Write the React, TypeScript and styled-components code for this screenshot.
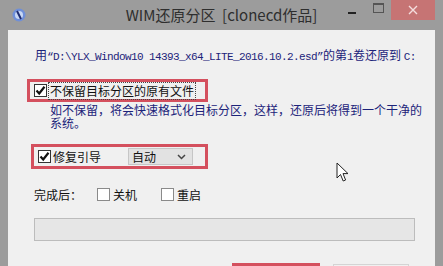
import React from 'react'
import styled, { createGlobalStyle } from 'styled-components'

const GlobalStyle = createGlobalStyle`
    html, body {
        margin: 0;
        padding: 0;
        width: 443px;
        height: 266px;
        overflow: hidden;
        background: #9c9c9c;
    }
    body {
        font-family: "Noto Sans CJK SC", "Liberation Sans", sans-serif;
    }
`

interface CheckProps {
    checked?: boolean
}

const CheckBox: React.FC<CheckProps> = ({ checked }) => {
    return (
        <Box className={checked ? 'on' : ''}>
            {checked && (
                <svg width="11" height="11" viewBox="0 0 11 11">
                    <path d="M1.5 5.5 L4.2 8.5 L9.5 1.8" fill="none" stroke="#111" strokeWidth="2.2" />
                </svg>
            )}
        </Box>
    )
}

const App: React.FC = () => {
    return (
        <Window>
            <GlobalStyle />
            <TitleBar>
                <AppIcon>
                    <svg width="14" height="14" viewBox="0 0 14 14">
                        <circle cx="7" cy="7" r="6.5" fill="#6f8fd8" />
                        <circle cx="7" cy="7" r="4" fill="#c8d8f4" />
                        <path d="M5 3 L9 11" stroke="#1c2a70" strokeWidth="2" />
                    </svg>
                </AppIcon>
                <Title>WIM还原分区&nbsp;&nbsp;[clonecd作品]</Title>
                <Controls>
                    <CtrlButton>
                        <MinGlyph />
                    </CtrlButton>
                    <CtrlButton>
                        <MaxGlyph />
                    </CtrlButton>
                    <CloseButton>
                        <svg width="10" height="10" viewBox="0 0 10 10">
                            <path d="M1 1 L9 9 M9 1 L1 9" stroke="#f4dede" strokeWidth="1.4" />
                        </svg>
                    </CloseButton>
                </Controls>
            </TitleBar>
            <Body>
                <PathLine>
                    用<Mono>“D:\YLX_Window10 14393_x64_LITE_2016.10.2.esd”</Mono>的第<Mono>1</Mono>卷还原到 <Mono>C:</Mono>
                </PathLine>
                <Highlight $left={19} $width={181} $height={23} $top={17}>
                    <CheckBox checked />
                    <FocusLabel>不保留目标分区的原有文件</FocusLabel>
                </Highlight>
                <Desc>
                    <div>如不保留，将会快速格式化目标分区，这样，还原后将得到一个干净的</div>
                    <div>系统。</div>
                </Desc>
                <Highlight $left={23} $width={177} $height={25} $top={15}>
                    <CheckBox checked />
                    <Label>修复引导</Label>
                    <Select>
                        自动
                        <svg width="9" height="6" viewBox="0 0 9 6">
                            <path d="M1 1 L4.5 4.5 L8 1" fill="none" stroke="#444" strokeWidth="1.5" />
                        </svg>
                    </Select>
                </Highlight>
                <FinishRow>
                    <span>完成后：</span>
                    <Option>
                        <CheckBox />
                        <span>关机</span>
                    </Option>
                    <Option>
                        <CheckBox />
                        <span>重启</span>
                    </Option>
                </FinishRow>
                <Progress />
                <ButtonRow>
                    <PrimaryButton />
                    <PlainButton />
                </ButtonRow>
                <Cursor>
                    <svg width="14" height="21" viewBox="0 0 14 21">
                        <path d="M1 1 L1 16 L4.5 12.5 L7.2 19 L9.6 18 L7 11.6 L12 11.6 Z" fill="#fff" stroke="#222" strokeWidth="1" strokeLinejoin="round" />
                    </svg>
                </Cursor>
            </Body>
        </Window>
    )
}

const Window = styled.div`
    width: 443px;
    height: 266px;
    display: flex;
    flex-direction: column;
    background: #9c9c9c;
    overflow: hidden;
`

const TitleBar = styled.div`
    height: 30px;
    flex-shrink: 0;
    display: flex;
    align-items: flex-start;
    position: relative;
`

const AppIcon = styled.div`
    width: 14px;
    height: 14px;
    margin: 8px 0 0 12px;
    display: flex;
`

const Title = styled.div`
    position: absolute;
    left: 0;
    right: 0;
    top: 5px;
    text-align: center;
    font-size: 15px;
    line-height: 20px;
    color: #2e2e2e;
`

const Controls = styled.div`
    margin-left: auto;
    margin-right: 8px;
    display: flex;
    align-items: flex-start;
`

const CtrlButton = styled.div`
    width: 27px;
    height: 20px;
    display: flex;
    align-items: center;
    justify-content: center;
`

const MinGlyph = styled.div`
    width: 8px;
    height: 2px;
    background: #222;
    margin-top: 6px;
`

const MaxGlyph = styled.div`
    width: 9px;
    height: 7px;
    border: 1px solid #555;
    border-top-width: 2px;
    margin-top: -4px;
`

const CloseButton = styled.div`
    width: 44px;
    height: 20px;
    margin-left: -1px;
    background: #c67474;
    display: flex;
    align-items: center;
    justify-content: center;
`

const Body = styled.div`
    flex: 1;
    margin: 0 8px 0 8px;
    background: #f0f0f0;
    position: relative;
    display: flex;
    flex-direction: column;
    align-items: flex-start;
    font-size: 12px;
    color: #111;
`

const PathLine = styled.div`
    margin: 18px 0 0 27px;
    line-height: 14px;
    height: 14px;
    white-space: nowrap;
    color: #1c237a;
`

const Mono = styled.span`
    font-family: "Liberation Mono", monospace;
    font-size: 11px;
    letter-spacing: -0.6px;
`

const Highlight = styled.div<{ $left: number; $width: number; $height: number; $top: number }>`
    box-sizing: border-box;
    margin-left: ${p => p.$left}px;
    margin-top: ${p => p.$top}px;
    width: ${p => p.$width}px;
    height: ${p => p.$height}px;
    border: 3px solid #d4505e;
    display: flex;
    align-items: center;
    padding-left: 4px;
`

const Box = styled.div`
    box-sizing: border-box;
    width: 13px;
    height: 13px;
    background: #fff;
    border: 1px solid #8a8a8a;
    display: flex;
    align-items: center;
    justify-content: center;
    flex-shrink: 0;

    &.on {
        border-color: #333;
    }
`

const Label = styled.span`
    margin-left: 2px;
    line-height: 16px;
    white-space: nowrap;
`

const FocusLabel = styled(Label)`
    outline: 1px dotted #444;
    padding: 0 1px;
`

const Desc = styled.div`
    margin-left: 42px;
    margin-top: 1px;
    display: flex;
    flex-direction: column;
    gap: 0;
    line-height: 13px;
    white-space: nowrap;
    color: #1c237a;

    div {
        height: 13px;
    }
`

const Select = styled.div`
    box-sizing: border-box;
    margin-left: 27px;
    width: 65px;
    height: 17px;
    background: #e2e2e2;
    border: 1px solid #c6c6c6;
    display: flex;
    align-items: center;
    justify-content: space-between;
    padding: 0 6px 0 3px;
    line-height: 15px;
`

const FinishRow = styled.div`
    margin: 17px 0 0 26px;
    height: 16px;
    display: flex;
    align-items: center;
    white-space: nowrap;
    gap: 15px;
`

const Option = styled.div`
    display: flex;
    align-items: center;
    gap: 3px;
    width: 49px;
`

const Progress = styled.div`
    box-sizing: border-box;
    margin: 16px 0 0 26px;
    width: 381px;
    height: 23px;
    background: #e6e6e6;
    border: 1px solid #bcbcbc;
`

const ButtonRow = styled.div`
    margin: 22px 0 0 224px;
    display: flex;
    gap: 13px;
`

const PrimaryButton = styled.div`
    box-sizing: border-box;
    width: 88px;
    height: 24px;
    border: 3px solid #d4505e;
    background: #e4e4e4;
`

const PlainButton = styled.div`
    box-sizing: border-box;
    width: 76px;
    height: 24px;
    border: 1px solid #d4d4d4;
    margin-top: 1px;
`

const Cursor = styled.div`
    position: absolute;
    left: 328px;
    top: 132px;
    display: flex;
`

export default App
